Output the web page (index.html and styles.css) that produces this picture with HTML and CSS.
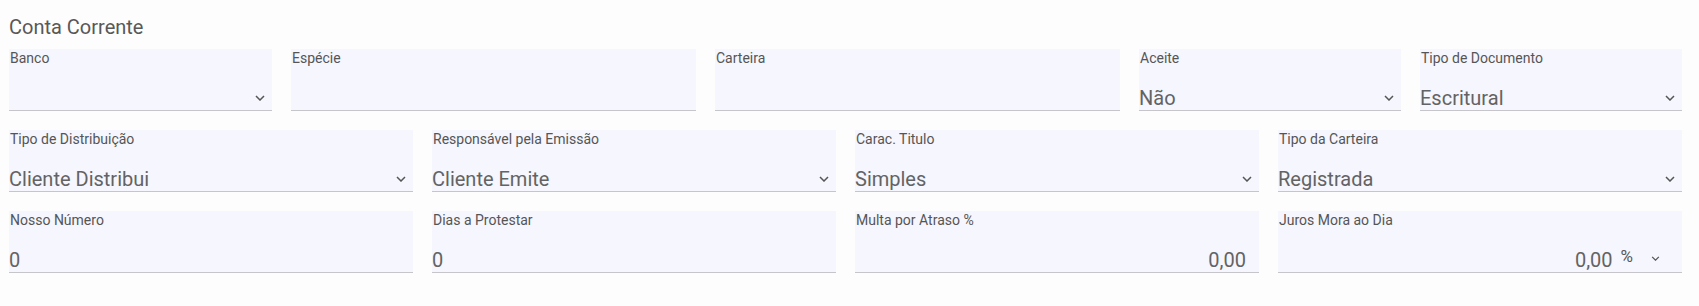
FILE: index.html
```html
<!DOCTYPE html>
<html lang="pt-BR">
<head>
<meta charset="utf-8">
<title>Conta Corrente</title>
<link rel="stylesheet" href="styles.css">
</head>
<body>
<div class="page">
  <h2 class="title">Conta Corrente</h2>

  <div class="row row-top">
    <div class="field select">
      <span class="label">Banco</span>
      <div class="control"><span class="value"></span><svg class="chev" viewBox="0 0 10 6"><path d="M1 1 L5 5 L9 1"/></svg></div>
    </div>
    <div class="field text">
      <span class="label">Espécie</span>
      <div class="control"><span class="value"></span></div>
    </div>
    <div class="field text">
      <span class="label">Carteira</span>
      <div class="control"><span class="value"></span></div>
    </div>
    <div class="field select">
      <span class="label">Aceite</span>
      <div class="control"><span class="value">Não</span><svg class="chev" viewBox="0 0 10 6"><path d="M1 1 L5 5 L9 1"/></svg></div>
    </div>
    <div class="field select">
      <span class="label">Tipo de Documento</span>
      <div class="control"><span class="value">Escritural</span><svg class="chev" viewBox="0 0 10 6"><path d="M1 1 L5 5 L9 1"/></svg></div>
    </div>
  </div>

  <div class="row row-four">
    <div class="field select">
      <span class="label">Tipo de Distribuição</span>
      <div class="control"><span class="value">Cliente Distribui</span><svg class="chev" viewBox="0 0 10 6"><path d="M1 1 L5 5 L9 1"/></svg></div>
    </div>
    <div class="field select">
      <span class="label">Responsável pela Emissão</span>
      <div class="control"><span class="value">Cliente Emite</span><svg class="chev" viewBox="0 0 10 6"><path d="M1 1 L5 5 L9 1"/></svg></div>
    </div>
    <div class="field select">
      <span class="label">Carac. Titulo</span>
      <div class="control"><span class="value">Simples</span><svg class="chev" viewBox="0 0 10 6"><path d="M1 1 L5 5 L9 1"/></svg></div>
    </div>
    <div class="field select">
      <span class="label">Tipo da Carteira</span>
      <div class="control"><span class="value">Registrada</span><svg class="chev" viewBox="0 0 10 6"><path d="M1 1 L5 5 L9 1"/></svg></div>
    </div>
  </div>

  <div class="row row-four">
    <div class="field text">
      <span class="label">Nosso Número</span>
      <div class="control"><span class="value">0</span></div>
    </div>
    <div class="field text">
      <span class="label">Dias a Protestar</span>
      <div class="control"><span class="value">0</span></div>
    </div>
    <div class="field text number">
      <span class="label">Multa por Atraso %</span>
      <div class="control"><span class="value">0,00</span></div>
    </div>
    <div class="field text number suffixed">
      <span class="label">Juros Mora ao Dia</span>
      <div class="control">
        <span class="value">0,00</span>
        <div class="addon"><span class="suffix">%</span><svg class="chev small" viewBox="0 0 10 6"><path d="M1 1 L5 5 L9 1"/></svg></div>
      </div>
    </div>
  </div>
</div>
</body>
</html>
```

FILE: styles.css
```css
* { box-sizing: border-box; }

html, body {
  margin: 0;
  padding: 0;
  background: #fdfdfe;
}

body {
  font-family: Roboto, "Liberation Sans", Arial, sans-serif;
  color: #555;
  width: 1699px;
  height: 306px;
  overflow: hidden;
}

.page {
  padding: 15px 17px 0 9px;
}

.title {
  margin: 0 0 10px 0;
  font-size: 20px;
  line-height: 24px;
  font-weight: 400;
  color: #585858;
}

.row {
  display: grid;
  column-gap: 19px;
  margin-bottom: 19px;
}

.row-top {
  grid-template-columns: 263fr 405fr 405fr 262fr 262fr;
}

.row-four {
  grid-template-columns: repeat(4, 1fr);
}

.field {
  height: 62px;
  background: #f5f6fe;
  border-bottom: 1px solid #c6c6ca;
  display: flex;
  flex-direction: column;
  justify-content: space-between;
}

.label {
  display: block;
  padding: 1px 0 0 1px;
  font-size: 14px;
  line-height: 16px;
  color: #555;
  white-space: nowrap;
}

.control {
  display: flex;
  align-items: center;
  height: 24px;
}

.value {
  flex: 1;
  font-size: 20px;
  line-height: 24px;
  color: #636363;
  white-space: nowrap;
}

.number .value {
  text-align: right;
  padding-right: 13px;
}

.suffixed .value {
  padding-right: 8px;
}

.addon {
  align-self: stretch;
  display: flex;
  align-items: flex-start;
}

.suffix {
  display: block;
  font-size: 17px;
  line-height: 17px;
  margin-top: 0;
  color: #585858;
}

.chev {
  width: 10px;
  height: 6px;
  margin-right: 7px;
  flex: none;
  fill: none;
  stroke: #555;
  stroke-width: 1.5;
}

.chev.small {
  width: 9px;
  height: 5px;
  margin-top: 8px;
  margin-left: 18px;
  margin-right: 22px;
}
```
